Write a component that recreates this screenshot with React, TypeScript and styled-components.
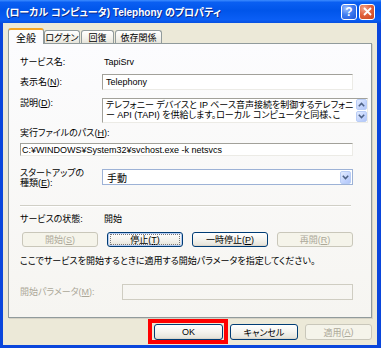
import { createGlobalStyle, styled } from "styled-components";

const GlobalStyle = createGlobalStyle`
  html, body {
    margin: 0;
    padding: 0;
    background: #fff;
  }
  body {
    font-family: "Liberation Sans", "Noto Sans CJK JP", sans-serif;
    font-size: 9px;
    font-feature-settings: "palt";
    color: #000;
  }
`

const Window = styled.div`
  width: 381px;
  height: 348px;
  display: flex;
  flex-direction: column;
  overflow: hidden;
`

const TitleBar = styled.div`
  flex: none;
  height: 23px;
  display: flex;
  align-items: center;
  gap: 2px;
  padding: 0 6px 0 6px;
  background: linear-gradient(180deg, #3d8cff 0%, #0a5ff2 10%, #0055ea 45%, #0a5ef5 85%, #0650e0 100%);
`

const Title = styled.div`
  flex: 1;
  color: #fff;
  font-size: 10px;
  font-weight: bold;
  white-space: nowrap;
  text-shadow: 1px 1px 0 #0c2a8c;
`

const CaptionButton = styled.div<{ $kind: "help" | "close" }>`
  width: 16px;
  height: 16px;
  box-sizing: border-box;
  border: 1px solid #fff;
  border-radius: 3px;
  display: flex;
  align-items: center;
  justify-content: center;
  color: #fff;
  font-size: 12px;
  font-weight: bold;
  background: ${(p) =>
    p.$kind === "close"
      ? "radial-gradient(circle at 30% 25%, #f2a58c 0%, #e2633e 45%, #c8431a 100%)"
      : "radial-gradient(circle at 30% 25%, #9fc0ff 0%, #3f7cf0 45%, #1f55d8 100%)"};
`

const Frame = styled.div`
  flex: 1;
  display: flex;
  flex-direction: column;
  border: solid #0a46dc;
  border-width: 0 4px 3px 3px;
  background: #ece9d8;
  padding: 5px 5px 5px 5px;
`

const TabStrip = styled.div`
  flex: none;
  height: 15px;
  display: flex;
  align-items: flex-end;
`

const Tab = styled.div<{ $active?: boolean; $w: number }>`
  position: relative;
  z-index: 1;
  width: ${(p) => p.$w}px;
  height: ${(p) => (p.$active ? 16 : 13)}px;
  margin-bottom: ${(p) => (p.$active ? -1 : 0)}px;
  margin-right: ${(p) => (p.$active ? 0 : 1)}px;
  box-sizing: border-box;
  display: flex;
  align-items: center;
  justify-content: center;
  border: 1px solid #919b9c;
  border-bottom: none;
  border-top: ${(p) => (p.$active ? "2px solid #f5a623" : "1px solid #919b9c")};
  border-radius: 3px 3px 0 0;
  background: ${(p) => (p.$active ? "#fcfcfe" : "linear-gradient(180deg, #fff 0%, #f3f2ec 60%, #e6e4da 100%)")};
  font-size: ${(p) => (p.$active ? 10 : 9)}px;
  white-space: nowrap;
`

const Panel = styled.div`
  flex: none;
  height: 275px;
  box-sizing: border-box;
  border: 1px solid #919b9c;
  box-shadow: 1px 1px 0 #d6d3c6;
  background: linear-gradient(180deg, #fcfcfe 0%, #f6f5f1 100%);
  padding: 11px 18px 0 11px;
  display: flex;
  flex-direction: column;
`

const Row = styled.div<{ $gap: number; $label?: number; $top?: boolean }>`
  display: grid;
  grid-template-columns: ${(p) => p.$label ?? 82}px 1fr;
  align-items: ${(p) => (p.$top ? "start" : "center")};
  margin-top: ${(p) => p.$gap}px;
`

const Line = styled.div<{ $gap: number; $muted?: boolean }>`
  margin-top: ${(p) => p.$gap}px;
  height: 12px;
  line-height: 12px;
  white-space: nowrap;
  color: ${(p) => (p.$muted ? "#aca899" : "#000")};
`

const Label = styled.div<{ $muted?: boolean }>`
  line-height: 12px;
  white-space: nowrap;
  color: ${(p) => (p.$muted ? "#aca899" : "#000")};
`

const StackedLabel = styled.div`
  margin-top: -1px;
  line-height: 10px;
`

const Value = styled.div`
  padding-left: 2px;
  line-height: 12px;
`

const Field = styled.div<{ $h: number; $disabled?: boolean; $pad?: number }>`
  height: ${(p) => p.$h}px;
  box-sizing: border-box;
  border: 1px solid;
  border-color: ${(p) => (p.$disabled ? "#cfcdc2" : "#a2a19a #ecebe6 #ecebe6 #a2a19a")};
  background: ${(p) => (p.$disabled ? "transparent" : "#fff")};
  padding: 0 ${(p) => p.$pad ?? 3}px;
  display: flex;
  align-items: center;
  white-space: nowrap;
  overflow: hidden;
`

const Memo = styled.div`
  height: 25px;
  box-sizing: border-box;
  border: 1px solid;
  border-color: #a2a19a #ecebe6 #ecebe6 #a2a19a;
  background: #fff;
  display: flex;
`

const MemoText = styled.div`
  flex: 1;
  padding: 1px 2px 0 3px;
  line-height: 10px;
  white-space: nowrap;
  overflow: hidden;
`

const ScrollBar = styled.div`
  width: 11px;
  display: flex;
  flex-direction: column;
  gap: 1px;
  padding: 0 0 0 1px;
`

const ArrowButton = styled.div<{ $h: number }>`
  width: 11px;
  height: ${(p) => p.$h}px;
  box-sizing: border-box;
  border: 1px solid #b9cdf6;
  border-radius: 2px;
  background: linear-gradient(135deg, #e3ecff 0%, #c3d4fd 60%, #b1c6f9 100%);
  display: flex;
  align-items: center;
  justify-content: center;
`

const Combo = styled.div`
  height: 16px;
  box-sizing: border-box;
  border: 1px solid #9db2d6;
  background: #fff;
  display: flex;
  align-items: center;
  padding: 0 1px 0 4px;
`

const ComboText = styled.div`
  flex: 1;
  font-size: 10px;
`

const Separator = styled.div`
  margin-top: 17px;
  margin-right: 2px;
  height: 1px;
  background: #d0cfc6;
  border-bottom: 1px solid #fff;
`

const ButtonRow = styled.div`
  margin-top: 7px;
  padding-left: 2px;
  display: flex;
  justify-content: space-between;
`

const Button = styled.div<{ $w: number; $h: number; $disabled?: boolean; $focus?: boolean; $mark?: boolean }>`
  position: relative;
  width: ${(p) => p.$w}px;
  height: ${(p) => p.$h}px;
  box-sizing: border-box;
  border: 1px solid ${(p) => (p.$disabled ? "#c9c7ba" : "#003c74")};
  border-radius: 3px;
  background: ${(p) =>
    p.$disabled ? "#f5f4ea" : "linear-gradient(180deg, #ffffff 0%, #f4f3ee 50%, #e8e6dd 88%, #d6d0c5 100%)"};
  color: ${(p) => (p.$disabled ? "#aca899" : "#000")};
  display: flex;
  align-items: center;
  justify-content: center;
  white-space: nowrap;
  font-size: 9px;
  box-shadow: ${(p) => (p.$focus ? "inset 0 0 0 1px #b6cdf3" : "none")};

  /* focus rectangle */
  &::before {
    content: "";
    display: ${(p) => (p.$focus ? "block" : "none")};
    position: absolute;
    inset: 1px 2px;
    border: 1px dotted #777;
  }

  /* red annotation frame drawn over the dialog */
  &::after {
    content: "";
    display: ${(p) => (p.$mark ? "block" : "none")};
    position: absolute;
    top: -6px;
    left: -7px;
    right: -6px;
    bottom: -5px;
    border: 4px solid #f00;
  }
`

const Footer = styled.div`
  margin-top: 6px;
  display: flex;
  justify-content: flex-end;
  gap: 7px;
`

const Chevron = ({ up }: { up?: boolean }) => (
  <svg width="7" height="5" viewBox="0 0 7 5">
    <path
      d={up ? "M0.8 4.2 L3.5 1.4 L6.2 4.2" : "M0.8 0.8 L3.5 3.6 L6.2 0.8"}
      fill="none"
      stroke="#4d6185"
      strokeWidth="1.5"
    />
  </svg>
)

const CloseGlyph = () => (
  <svg width="9" height="9" viewBox="0 0 9 9">
    <path d="M1 1 L8 8 M8 1 L1 8" stroke="#fff" strokeWidth="1.8" />
  </svg>
)

export default function App() {
  return (
    <>
      <GlobalStyle />
      <Window>
        <TitleBar>
          <Title>(ローカル コンピュータ) Telephony のプロパティ</Title>
          <CaptionButton $kind="help">?</CaptionButton>
          <CaptionButton $kind="close">
            <CloseGlyph />
          </CaptionButton>
        </TitleBar>
        <Frame>
          <TabStrip>
            <Tab $active $w={36}>全般</Tab>
            <Tab $w={36}>ログオン</Tab>
            <Tab $w={33}>回復</Tab>
            <Tab $w={47}>依存関係</Tab>
          </TabStrip>
          <Panel>
            <Row $gap={0} style={{ height: 14 }}>
              <Label>サービス名:</Label>
              <Value>TapiSrv</Value>
            </Row>
            <Row $gap={5}>
              <Label>
                表示名(<u>N</u>):
              </Label>
              <Field $h={16}>Telephony</Field>
            </Row>
            <Row $gap={8} $top>
              <Label style={{ lineHeight: "11px" }}>
                説明(<u>D</u>):
              </Label>
              <Memo>
                <MemoText>
                  テレフォニー デバイスと IP ベース音声接続を制御するテレフォニ
                  <br />
                  ー API (TAPI) を供給します。ローカル コンピュータと同様、こ
                </MemoText>
                <ScrollBar>
                  <ArrowButton $h={11}>
                    <Chevron up />
                  </ArrowButton>
                  <ArrowButton $h={11}>
                    <Chevron />
                  </ArrowButton>
                </ScrollBar>
              </Memo>
            </Row>
            <Line $gap={4}>
              実行ファイルのパス(<u>H</u>):
            </Line>
            <Field $h={13} $pad={1} style={{ marginTop: 4 }}>
              C:¥WINDOWS¥System32¥svchost.exe -k netsvcs
            </Field>
            <Row $gap={13} $top>
              <StackedLabel>
                スタートアップの
                <br />
                種類(<u>E</u>):
              </StackedLabel>
              <Combo>
                <ComboText>手動</ComboText>
                <ArrowButton $h={13}>
                  <Chevron />
                </ArrowButton>
              </Combo>
            </Row>
            <Separator />
            <Row $gap={6}>
              <Label>サービスの状態:</Label>
              <Value>開始</Value>
            </Row>
            <ButtonRow>
              <Button $w={76} $h={15} $disabled>
                開始(<u>S</u>)
              </Button>
              <Button $w={76} $h={15} $focus>
                停止(<u>T</u>)
              </Button>
              <Button $w={76} $h={15}>
                一時停止(<u>P</u>)
              </Button>
              <Button $w={76} $h={15} $disabled>
                再開(<u>R</u>)
              </Button>
            </ButtonRow>
            <Line $gap={8}>ここでサービスを開始するときに適用する開始パラメータを指定してください。</Line>
            <Row $gap={17} $label={102}>
              <Label $muted>
                開始パラメータ(<u>M</u>):
              </Label>
              <Field $h={16} $disabled />
            </Row>
          </Panel>
          <Footer>
            <Button $w={69} $h={16} $mark>
              OK
            </Button>
            <Button $w={68} $h={16}>
              キャンセル
            </Button>
            <Button $w={67} $h={16} $disabled>
              適用(<u>A</u>)
            </Button>
          </Footer>
        </Frame>
      </Window>
    </>
  )
}
